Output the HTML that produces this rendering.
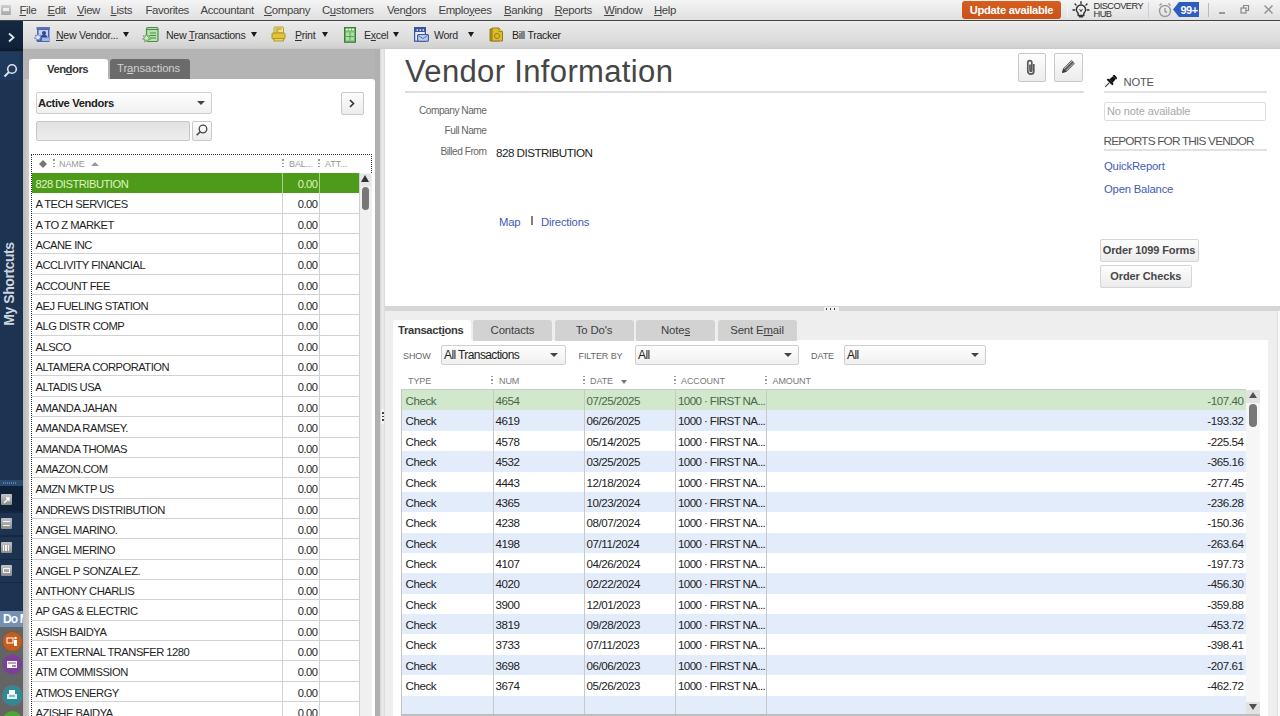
<!DOCTYPE html>
<html><head><meta charset="utf-8">
<style>
*{box-sizing:border-box;margin:0;padding:0}
html,body{width:1280px;height:716px;overflow:hidden;background:#fff;font-family:"Liberation Sans",sans-serif;position:relative}
.a{position:absolute}
u{text-decoration:underline}
/* menu bar */
#menu{left:0;top:0;width:1280px;height:21px;background:linear-gradient(#f4f4f4,#e0e0e0);border-bottom:1px solid #444}
.mi{position:absolute;top:3.5px;font-size:11.4px;color:#444;white-space:nowrap;letter-spacing:-0.38px}
/* toolbar */
#tool{left:23px;top:21px;width:1257px;height:28px;background:linear-gradient(#f0f0f0 0,#e8e8e8 12%,#dcdcdc 70%,#d0d0d0 96%,#c6c6c6 100%)}
.tb{position:absolute;top:28.5px;font-size:10.6px;color:#2c2c2c;white-space:nowrap;letter-spacing:-0.3px}
.arr{position:absolute;width:0;height:0;border-left:3.5px solid transparent;border-right:3.5px solid transparent;border-top:5px solid #1a1a1a;margin-top:1px;margin-left:0.5px}
.arrs{position:absolute;width:0;height:0;border-left:4px solid transparent;border-right:4px solid transparent;border-top:4.5px solid #444}
/* sidebar */
#side{left:0;top:21px;width:23px;height:695px;background:#1c3351}
/* vendor panel */
#vpanel{left:23px;top:49px;width:352px;height:668px;background:#b4b4b4}
#vstrip{left:23px;top:79px;width:6px;height:637px;background:linear-gradient(90deg,#b9b9b9,#cfcfcf)}
#vwhite{left:29px;top:79px;width:346px;height:637px;background:#fff;border-top-right-radius:3px}
.vr{position:absolute;left:32px;width:327px;height:20.35px;font-size:11.2px;color:#1e1e1e;background:#fff;letter-spacing:-0.5px}
.vr:after{content:"";position:absolute;left:0;right:0;bottom:0;height:1px;background:#d2d2d2}
.vr .vn{position:absolute;left:3.5px;top:4.5px;white-space:nowrap}
.vr .vb{position:absolute;left:250px;width:35.5px;text-align:right;top:4.5px}
.vr.sel{background:#4e9b1b;color:#dff5bf;height:20.5px !important}
.vr.sel:after{background:#4e9b1b}
.btn{position:absolute;background:linear-gradient(#fdfdfd,#ececec);border:1px solid #c9c9c9;border-radius:2px}
/* splitter */
#split{left:375px;top:49px;width:10px;height:667px;background:linear-gradient(90deg,#b0b0b0 0,#b0b0b0 5px,#d6d6d6 5px,#ececec 7.5px,#d9d9d9 10px)}
/* right pane */
#rpane{left:385px;top:49px;width:895px;height:257px;background:#fff}
.lbl{position:absolute;font-size:10.2px;color:#666;white-space:nowrap;text-align:right;letter-spacing:-0.5px}
.lnk{position:absolute;font-size:11.3px;color:#3f5db6;white-space:nowrap;letter-spacing:-0.2px}
#hsplit{left:385px;top:306px;width:895px;height:5px;background:#d6d6d6}
#tpane{left:385px;top:311px;width:895px;height:405px;background:#eeeeee}
#twhite{left:393px;top:340px;width:875px;height:376px;background:#fff}
.tab{position:absolute;top:320px;height:20.5px;background:#d2d2d2;border-radius:3px 3px 0 0;font-size:11.4px;color:#3e3e3e;text-align:center;line-height:20px;letter-spacing:-0.15px}
.tr{position:absolute;left:402px;width:844px;height:20.35px;font-size:11.6px;color:#222;background:#fff;letter-spacing:-0.45px}
.tr.alt{background:#e2ecfb}
.tr.sel{background:#d2e8cc;color:#4a664a}
.tr span{position:absolute;top:4px;white-space:nowrap}
.t1{left:3.5px}.t2{left:93.5px}.t3{left:184.5px}.t4{left:276px;letter-spacing:-0.62px}.t5{right:2.5px}
.cl{position:absolute;top:390px;width:1px;height:324px;background:#c8c8c8}
.hd{position:absolute;top:376px;font-size:9px;color:#777;letter-spacing:-0.1px;white-space:nowrap}
.dots{position:absolute;width:2px;height:9px;background:repeating-linear-gradient(#999 0,#999 1.5px,transparent 1.5px,transparent 3.5px)}
.dd{position:absolute;background:linear-gradient(#fefefe,#f0f0f0);border:1px solid #cfcfcf;border-radius:2px;font-size:12px;color:#222;white-space:nowrap;letter-spacing:-0.6px;line-height:19px !important}
</style></head><body>
<!-- MENU -->
<div id="menu" class="a">
 <div class="a" style="left:1px;top:5px;width:10px;height:10px;background:linear-gradient(#d0d0d0,#a8a8a8);border-radius:1px"></div>
 <div class="a" style="left:3px;top:8px;width:6px;height:3px;background:#eee"></div>
 <span class="mi" style="left:19.5px"><u>F</u>ile</span>
 <span class="mi" style="left:47.5px"><u>E</u>dit</span>
 <span class="mi" style="left:77px"><u>V</u>iew</span>
 <span class="mi" style="left:110.5px"><u>L</u>ists</span>
 <span class="mi" style="left:145.5px">Favorites</span>
 <span class="mi" style="left:200.5px">Accountant</span>
 <span class="mi" style="left:264px"><u>C</u>ompany</span>
 <span class="mi" style="left:322px">C<u>u</u>stomers</span>
 <span class="mi" style="left:387px">Ven<u>d</u>ors</span>
 <span class="mi" style="left:438.5px">Emplo<u>y</u>ees</span>
 <span class="mi" style="left:504px"><u>B</u>anking</span>
 <span class="mi" style="left:554.5px"><u>R</u>eports</span>
 <span class="mi" style="left:604px"><u>W</u>indow</span>
 <span class="mi" style="left:654px"><u>H</u>elp</span>
 <div class="a" style="left:962px;top:1px;width:99px;height:18px;background:linear-gradient(#d65e1e,#c9521a);border-radius:3px;color:#fff;font-weight:bold;font-size:11.2px;text-align:center;line-height:18px;letter-spacing:-0.3px">Update available</div>
 <div class="a" style="left:1067px;top:2px;width:1px;height:16px;background:#f4f4f4"></div>
 <!-- bulb -->
 <svg class="a" style="left:1072px;top:1px" width="20" height="18" viewBox="0 0 20 18"><g stroke="#2f2f2f" stroke-width="1.4" fill="none" stroke-linecap="round"><path d="M6.2 12.2A4.6 4.6 0 1 1 11.8 12.2V14.5H6.2Z"/><path d="M7.5 15.8h3"/><path d="M9 0.8v1.6M3 3l1 1M15 3l-1 1M1 9h1.8M15.2 9H17"/><path d="M7.8 8.5l1.2 2 1.2-2" stroke-width="1"/></g></svg>
 <div class="a" style="left:1093.5px;top:1.5px;font-size:9.3px;line-height:8.7px;color:#2c2c2c;letter-spacing:-0.55px">DISCOVERY<br>HUB</div>
 <div class="a" style="left:1148px;top:2px;width:1px;height:16px;background:#cfcfcf"></div>
 <svg class="a" style="left:1157px;top:2px" width="16" height="16" viewBox="0 0 16 16"><g stroke="#999" stroke-width="1.4" fill="none"><circle cx="8" cy="9" r="5.5"/><path d="M8 6v3.5l2 1"/><path d="M2.5 3.5l2-2M13.5 3.5l-2-2"/></g></svg>
 <svg class="a" style="left:1173px;top:2px" width="26" height="15" viewBox="0 0 26 15"><path d="M0 7.5L6 0H26V15H6Z" fill="#2f5cc0"/><text x="16" y="11.5" font-family="Liberation Sans" font-weight="bold" font-size="11" fill="#fff" text-anchor="middle" letter-spacing="-0.5">99+</text></svg>
 <div class="a" style="left:1208px;top:3px;width:1px;height:14px;background:#bbb"></div>
 <div class="a" style="left:1219px;top:12px;width:6px;height:2px;background:#999"></div>
 <svg class="a" style="left:1240px;top:4px" width="10" height="10" viewBox="0 0 10 10"><g stroke="#888" stroke-width="1.2" fill="none"><rect x="1" y="4" width="5" height="5"/><path d="M3.5 4V1.5h5v5H6"/></g></svg>
 <svg class="a" style="left:1263px;top:4px" width="11" height="11" viewBox="0 0 11 11"><g stroke="#999" stroke-width="1.6"><path d="M1.5 1.5l8 8M9.5 1.5l-8 8"/></g></svg>
</div>
<!-- TOOLBAR -->
<div id="tool" class="a"></div>
<svg class="a" style="left:34px;top:26px" width="18" height="17" viewBox="0 0 18 17"><rect x="2.5" y="1" width="13.5" height="2.5" rx=".5" fill="#5b73b5"/><rect x="3" y="3" width="12.5" height="13" fill="#4b66ae"/><rect x="4.5" y="4" width="9.5" height="9" fill="#c3d0f0"/><circle cx="10" cy="7" r="2" fill="#2c4896"/><path d="M6 13c0-3 2-4.5 4-4.5s4 1.5 4 4.5z" fill="#2c4896"/><rect x="8" y="11.5" width="7" height="3.5" fill="#9fb8ec"/><path d="M4 7.5l.9 2.1 2.2-.6-1.2 1.9 1.9 1.3-2.3.3.3 2.3-1.8-1.5-1.8 1.5.3-2.3-2.3-.3 1.9-1.3L1 9l2.2.6z" fill="#dbe6ff" stroke="#3a58a8" stroke-width=".5"/></svg>
<span class="tb" style="left:56px"><u>N</u>ew Vendor...</span>
<div class="arr" style="left:122px;top:31px"></div>
<svg class="a" style="left:142px;top:26px" width="18" height="17" viewBox="0 0 18 17"><rect x="4.5" y="1.5" width="11.5" height="14" rx="1.5" fill="#b3e3ad" stroke="#4f8a4a" stroke-width="1.2"/><path d="M5 3.5h11" stroke="#4f8a4a"/><path d="M8 7h6M8 9.5h6M8 12h6" stroke="#4f8a4a" stroke-width="1"/><path d="M4.5 8l1 2.3 2.4-.6-1.3 2 2 1.4-2.5.3.3 2.5-1.9-1.6-1.9 1.6.3-2.5-2.4-.3 2-1.4L1.2 9.7l2.4.6z" fill="#c2f0bc" stroke="#3f7a3a" stroke-width=".6"/></svg>
<span class="tb" style="left:166px">New <u>T</u>ransactions</span>
<div class="arr" style="left:250px;top:31px"></div>
<svg class="a" style="left:271px;top:26px" width="15" height="16" viewBox="0 0 15 16"><rect x="3" y="1" width="9.5" height="6" rx="1" fill="#f5e08a" stroke="#b39a22" stroke-width=".9"/><path d="M4.5 3h6M4.5 5h3" stroke="#8a7410" stroke-width=".8"/><rect x="1" y="7" width="13" height="6" rx="1" fill="#e3c23c" stroke="#a88c1a" stroke-width=".9"/><rect x="3" y="12.5" width="9.5" height="2.5" fill="#efd45a" stroke="#a88c1a" stroke-width=".8"/></svg>
<span class="tb" style="left:295px"><u>P</u>rint</span>
<div class="arr" style="left:321px;top:31px"></div>
<svg class="a" style="left:343.5px;top:26.5px" width="12" height="16" viewBox="0 0 12 16"><rect x=".6" y=".6" width="10.8" height="14.6" fill="#7cbf72" stroke="#3f7a3f" stroke-width="1.2"/><path d="M2 2.5h2M5 2.5h2M8 2.5h2" stroke="#eaffea" stroke-width="1.6"/><rect x="2" y="5.5" width="8" height="8" fill="#a8e2a0"/><path d="M6 5.5v8M2 9.5h8" stroke="#4f8f4a" stroke-width=".8"/></svg>
<span class="tb" style="left:364px">E<u>x</u>cel</span>
<div class="arr" style="left:392px;top:31px"></div>
<svg class="a" style="left:413.5px;top:26.5px" width="15" height="15" viewBox="0 0 15 15"><rect x=".6" y=".6" width="10.8" height="13.6" fill="#e6ecfb" stroke="#3d5395" stroke-width="1.2"/><rect x="1" y="1" width="10" height="4" fill="#3d5395"/><path d="M2.5 3h1.5M5.5 3h1.5M8.5 3h1.5" stroke="#e6ecfb" stroke-width="1.4"/><rect x="3.6" y="7.5" width="10.8" height="6.8" rx="1" fill="#b9cdf3" stroke="#3d5395" stroke-width="1.1"/><path d="M4.5 8.5l4.5 3.2 4.5-3.2" stroke="#3d5395" fill="none" stroke-width=".8"/></svg>
<span class="tb" style="left:434px">Word</span>
<div class="arr" style="left:467px;top:31px"></div>
<svg class="a" style="left:488.5px;top:26.5px" width="15" height="15" viewBox="0 0 15 15"><path d="M1 2h9v12H1z" fill="#b59a1c" stroke="#7f6a10" stroke-width=".8"/><path d="M3 1h7l3.5 3.5V14H3z" fill="#dcbc2c" stroke="#8d7612" stroke-width=".9"/><path d="M10 1v3.5h3.5" fill="#f3dc6a" stroke="#8d7612" stroke-width=".8"/><circle cx="8" cy="9" r="2.5" fill="none" stroke="#8d7612" stroke-width=".9"/></svg>
<span class="tb" style="left:512px;color:#222">Bill Tracker</span>
<!-- SIDEBAR -->
<div id="side" class="a"></div>
<div class="a" style="left:0;top:21px;width:23px;height:30px;background:linear-gradient(#142841,#10233a 85%,#0b1828)"></div>
<svg class="a" style="left:7px;top:32px" width="9" height="11" viewBox="0 0 9 11"><path d="M2 1.5l4.5 4-4.5 4" stroke="#dfe6ee" stroke-width="1.8" fill="none"/></svg>

<div class="a" style="left:0;top:52px;width:20px;height:28px;background:#1f3a5d"></div>

<svg class="a" style="left:3px;top:63px" width="15" height="15" viewBox="0 0 15 15"><circle cx="9" cy="6" r="4.3" stroke="#dbe3ec" stroke-width="1.6" fill="none"/><path d="M6 9l-4.5 4.5" stroke="#dbe3ec" stroke-width="2"/></svg>
<div class="a" style="left:-41px;top:276px;width:100px;height:16px;transform:rotate(-90deg);color:#cdd5df;font-weight:bold;font-size:14px;text-align:center;letter-spacing:-0.45px;line-height:16px;white-space:nowrap">My Shortcuts</div>
<div class="a" style="left:0;top:480px;width:23px;height:6px;background:#2a4b70"></div>
<div class="a" style="left:3px;top:482px;width:14px;height:2px;background:repeating-linear-gradient(90deg,#5d7fa6 0,#5d7fa6 1px,transparent 1px,transparent 2px)"></div>
<div class="a" style="left:0;top:486px;width:23px;height:25px;background:#10213a"></div>
<div class="a" style="left:0;top:511px;width:23px;height:1.5px;background:#142842"></div>
<div class="a" style="left:0;top:535px;width:23px;height:1.5px;background:#142842"></div>
<div class="a" style="left:0;top:558.5px;width:23px;height:1.5px;background:#142842"></div>
<div class="a" style="left:0;top:581.5px;width:23px;height:1.5px;background:#142842"></div>
<div class="a" style="left:1px;top:494px;width:11px;height:11px;background:linear-gradient(#c4c4c4,#8c8c8c);border-radius:1px"></div>
<svg class="a" style="left:3px;top:496px" width="8" height="8" viewBox="0 0 8 8"><path d="M1 7L6 2M3 2h3v3" stroke="#fff" stroke-width="1.3" fill="none"/></svg>
<div class="a" style="left:1px;top:518px;width:11px;height:11px;background:linear-gradient(#c4c4c4,#8c8c8c);border-radius:1px"></div>
<div class="a" style="left:3px;top:521px;width:7px;height:5px;border-top:1px solid #f4f4f4;border-bottom:1px solid #f4f4f4"></div>
<div class="a" style="left:1px;top:542px;width:11px;height:11px;background:linear-gradient(#c4c4c4,#8c8c8c);border-radius:1px"></div>
<div class="a" style="left:3px;top:545px;width:7px;height:6px;background:repeating-linear-gradient(90deg,#f4f4f4 0,#f4f4f4 1px,transparent 1px,transparent 2.5px)"></div>
<div class="a" style="left:1px;top:565px;width:11px;height:11px;background:linear-gradient(#c4c4c4,#8c8c8c);border-radius:1px"></div>
<div class="a" style="left:3px;top:568px;width:7px;height:5px;border:1px solid #f4f4f4"></div>
<div class="a" style="left:0;top:611px;width:23px;height:16px;background:#7490b2;color:#fff;font-weight:bold;font-size:12px;line-height:16px;padding-left:3px;white-space:nowrap;overflow:hidden;letter-spacing:-0.9px">Do M</div>
<div class="a" style="left:0;top:627px;width:23px;height:89px;background:#646464"></div>
<div class="a" style="left:2.5px;top:631.5px;width:19px;height:19px;border-radius:50%;background:#c55d1c;box-shadow:0 0 0 1px #7a5a48"></div>
<svg class="a" style="left:6px;top:635px" width="12" height="12" viewBox="0 0 12 12"><rect x="1" y="3" width="6" height="5" stroke="#fff" fill="none"/><circle cx="9.5" cy="3" r="1.3" fill="#fff"/><rect x="8" y="5" width="3" height="6" fill="#fff"/></svg>
<div class="a" style="left:2.5px;top:655px;width:19px;height:19px;border-radius:50%;background:#7b3f9a;box-shadow:0 0 0 1px #6a5a74"></div>
<svg class="a" style="left:6px;top:659px" width="12" height="11" viewBox="0 0 12 11"><rect x="1" y="2" width="10" height="7" fill="#fff"/><path d="M2 4h8" stroke="#7b3f9a"/><circle cx="7" cy="7" r=".9" fill="#7b3f9a"/><circle cx="9" cy="7" r=".9" fill="#7b3f9a"/></svg>
<div class="a" style="left:2.5px;top:685.5px;width:19px;height:19px;border-radius:50%;background:#2f8a98;box-shadow:0 0 0 1px #587a80"></div>
<svg class="a" style="left:6px;top:689px" width="12" height="12" viewBox="0 0 12 12"><rect x="3" y="1" width="6" height="4" fill="#fff"/><rect x="1" y="5" width="10" height="5" fill="#dfeff2"/><path d="M3 7h6" stroke="#2f8a98"/></svg>
<div class="a" style="left:2.5px;top:711px;width:19px;height:19px;border-radius:50%;background:#4aa830"></div>
<!-- VENDOR PANEL -->
<div id="vpanel" class="a"></div>
<div class="a" style="left:29px;top:58.5px;width:78.5px;height:21px;background:#fff;border-radius:3px 3px 0 0;font-weight:bold;font-size:11.3px;color:#383838;line-height:20px;padding-left:18px;letter-spacing:-0.5px">Ven<u>d</u>ors</div>
<div class="a" style="left:110px;top:58.5px;width:79.5px;height:20.5px;background:#6b6b6b;border-radius:3px 3px 0 0;font-size:11.3px;color:#d0d0d0;line-height:19px;padding-left:7px;letter-spacing:-0.1px">Tr<u>a</u>nsactions</div>
<div id="vstrip" class="a"></div>
<div id="vwhite" class="a"></div>
<div class="dd" style="left:35.5px;top:91.5px;width:176px;height:22.5px;font-weight:bold;font-size:11.2px;line-height:21px !important;padding-left:1.5px;color:#222;letter-spacing:-0.35px">Active Vendors</div>
<div class="arrs" style="left:197px;top:100.5px"></div>
<div class="a" style="left:35.5px;top:121px;width:154px;height:19.5px;background:linear-gradient(#e2e2e2,#ededed);border:1px solid #c6c6c6;border-radius:2px"></div>
<div class="btn" style="left:192px;top:121px;width:19.5px;height:19.5px"></div>
<svg class="a" style="left:195px;top:123px" width="14" height="14" viewBox="0 0 14 14"><circle cx="8" cy="6" r="3.8" stroke="#444" stroke-width="1.3" fill="none"/><path d="M5.2 8.8l-3.5 3.5" stroke="#444" stroke-width="1.6"/></svg>
<div class="btn" style="left:340.5px;top:92px;width:23.5px;height:23px"></div>
<svg class="a" style="left:348px;top:99px" width="8" height="9" viewBox="0 0 8 9"><path d="M2 1l3.5 3.5L2 8" stroke="#333" stroke-width="1.6" fill="none"/></svg>
<!-- list header -->
<div class="a" style="left:31px;top:154px;width:341px;height:562px;border-left:1px dotted #333;border-top:1px dotted #333"></div>
<div class="a" style="left:371px;top:154px;width:1px;height:19px;border-left:1px dotted #333"></div>
<svg class="a" style="left:38px;top:159px" width="10" height="10" viewBox="0 0 10 10"><path d="M5 1L9 5 5 9 1 5z" fill="#777"/></svg>
<div class="dots" style="left:52.5px;top:159px"></div>
<span class="hd" style="left:59px;top:159px;color:#999">NAME</span>
<div class="a" style="left:91px;top:162px;width:0;height:0;border-left:4px solid transparent;border-right:4px solid transparent;border-bottom:4px solid #999"></div>
<div class="dots" style="left:281.5px;top:159px"></div>
<span class="hd" style="left:289px;top:159px;color:#999">BAL...</span>
<div class="dots" style="left:318px;top:159px"></div>
<span class="hd" style="left:325px;top:159px;color:#999">ATT...</span>
<div class="vr sel" style="top:173px;height:20px"><span class="vn">828 DISTRIBUTION</span><span class="vb">0.00</span></div>
<div class="vr" style="top:193px;height:21px"><span class="vn">A TECH SERVICES</span><span class="vb">0.00</span></div>
<div class="vr" style="top:214px;height:20px"><span class="vn">A TO Z MARKET</span><span class="vb">0.00</span></div>
<div class="vr" style="top:234px;height:20px"><span class="vn">ACANE INC</span><span class="vb">0.00</span></div>
<div class="vr" style="top:254px;height:21px"><span class="vn">ACCLIVITY FINANCIAL</span><span class="vb">0.00</span></div>
<div class="vr" style="top:275px;height:20px"><span class="vn">ACCOUNT FEE</span><span class="vb">0.00</span></div>
<div class="vr" style="top:295px;height:20px"><span class="vn">AEJ FUELING STATION</span><span class="vb">0.00</span></div>
<div class="vr" style="top:315px;height:21px"><span class="vn">ALG DISTR COMP</span><span class="vb">0.00</span></div>
<div class="vr" style="top:336px;height:20px"><span class="vn">ALSCO</span><span class="vb">0.00</span></div>
<div class="vr" style="top:356px;height:20px"><span class="vn">ALTAMERA CORPORATION</span><span class="vb">0.00</span></div>
<div class="vr" style="top:376px;height:21px"><span class="vn">ALTADIS USA</span><span class="vb">0.00</span></div>
<div class="vr" style="top:397px;height:20px"><span class="vn">AMANDA JAHAN</span><span class="vb">0.00</span></div>
<div class="vr" style="top:417px;height:21px"><span class="vn">AMANDA RAMSEY.</span><span class="vb">0.00</span></div>
<div class="vr" style="top:438px;height:20px"><span class="vn">AMANDA THOMAS</span><span class="vb">0.00</span></div>
<div class="vr" style="top:458px;height:20px"><span class="vn">AMAZON.COM</span><span class="vb">0.00</span></div>
<div class="vr" style="top:478px;height:21px"><span class="vn">AMZN MKTP US</span><span class="vb">0.00</span></div>
<div class="vr" style="top:499px;height:20px"><span class="vn">ANDREWS DISTRIBUTION</span><span class="vb">0.00</span></div>
<div class="vr" style="top:519px;height:20px"><span class="vn">ANGEL MARINO.</span><span class="vb">0.00</span></div>
<div class="vr" style="top:539px;height:21px"><span class="vn">ANGEL MERINO</span><span class="vb">0.00</span></div>
<div class="vr" style="top:560px;height:20px"><span class="vn">ANGEL P SONZALEZ.</span><span class="vb">0.00</span></div>
<div class="vr" style="top:580px;height:20px"><span class="vn">ANTHONY CHARLIS</span><span class="vb">0.00</span></div>
<div class="vr" style="top:600px;height:21px"><span class="vn">AP GAS &amp; ELECTRIC</span><span class="vb">0.00</span></div>
<div class="vr" style="top:621px;height:20px"><span class="vn">ASISH BAIDYA</span><span class="vb">0.00</span></div>
<div class="vr" style="top:641px;height:20px"><span class="vn">AT EXTERNAL TRANSFER 1280</span><span class="vb">0.00</span></div>
<div class="vr" style="top:661px;height:21px"><span class="vn">ATM COMMISSION</span><span class="vb">0.00</span></div>
<div class="vr" style="top:682px;height:20px"><span class="vn">ATMOS ENERGY</span><span class="vb">0.00</span></div>
<div class="vr" style="top:702px;height:20px"><span class="vn">AZISHE BAIDYA</span><span class="vb">0.00</span></div>
<div class="a" style="left:282px;top:173px;width:1px;height:543px;background:#d2d2d2"></div>
<div class="a" style="left:318.5px;top:173px;width:1px;height:543px;background:#d2d2d2"></div>
<div class="a" style="left:282px;top:173px;width:1px;height:20px;background:#a6d38a"></div>
<div class="a" style="left:318.5px;top:173px;width:1px;height:20px;background:#a6d38a"></div>
<!-- vendor scrollbar -->
<div class="a" style="left:359px;top:173px;width:12.5px;height:543px;background:#f0f0f0;border-left:1px solid #d0d0d0"></div>
<div class="a" style="left:360px;top:174px;width:11px;height:12px;background:#e6e6e6"></div>
<div class="a" style="left:361px;top:175px;width:0;height:0;border-left:4.5px solid transparent;border-right:4.5px solid transparent;border-bottom:7px solid #333"></div>
<div class="a" style="left:361.5px;top:187px;width:7.5px;height:23px;background:#777;border-radius:4px"></div>
<!-- SPLITTER -->
<div id="split" class="a"></div>
<div class="a" style="left:381px;top:409px;width:3px;height:15px;background:#f6f6f6"></div><div class="a" style="left:382px;top:412px;width:1.5px;height:10px;background:repeating-linear-gradient(#444 0,#444 1.5px,transparent 1.5px,transparent 3.5px)"></div>
<!-- RIGHT PANE -->
<div id="rpane" class="a"></div>
<div class="a" style="left:405px;top:54px;font-size:31px;color:#454545;letter-spacing:0.35px;white-space:nowrap">Vendor Information</div>
<div class="a" style="left:405px;top:91px;width:679px;height:2px;background:#dedede"></div>
<div class="btn" style="left:1017.5px;top:53px;width:28px;height:28.5px"></div>
<svg class="a" style="left:1025px;top:59px" width="12" height="17" viewBox="0 0 12 17"><path d="M8.8 5v7.2a3 3 0 0 1-6 0V3.6a2 2 0 0 1 4 0V11.5a.9.9 0 0 1-1.8 0V5.5" stroke="#5a5a5a" stroke-width="1.7" fill="none"/></svg>
<div class="btn" style="left:1054px;top:53px;width:29px;height:28.5px"></div>
<svg class="a" style="left:1061px;top:59px" width="15" height="15" viewBox="0 0 15 15"><path d="M1 14l1.2-4.6L10.5 1.1l3.4 3.4-8.3 8.3z" fill="#5c5c5c"/><path d="M3.2 9.9l7.9-7.9M5 11.7l7.9-7.9" stroke="#e8e8e8" stroke-width=".7"/><path d="M1 14l1.2-4.6 3.4 3.4z" fill="#3a3a3a"/></svg>
<span class="lbl" style="left:405.5px;width:81px;top:104.5px">Company Name</span>
<span class="lbl" style="left:405.5px;width:81px;top:125px">Full Name</span>
<span class="lbl" style="left:405.5px;width:81px;top:145.5px">Billed From</span>
<span class="a" style="left:496px;top:146px;font-size:11.7px;color:#222;letter-spacing:-0.55px;white-space:nowrap">828 DISTRIBUTION</span>
<span class="lnk" style="left:499px;top:215.5px">Map</span>
<div class="a" style="left:531px;top:215.5px;width:2px;height:9.5px;background:#857a7c"></div>
<span class="lnk" style="left:541px;top:215.5px">Directions</span>
<svg class="a" style="left:1104px;top:75px" width="13" height="13" viewBox="0 0 13 13"><g transform="rotate(45 6.5 6.5)"><rect x="4" y="-1" width="5" height="2" fill="#111"/><path d="M4.6 1h3.8l.6 5H4z" fill="#111"/><rect x="2.5" y="6" width="8" height="2" rx=".5" fill="#111"/><path d="M6.5 8v6" stroke="#333" stroke-width="1"/></g></svg>
<span class="a" style="left:1123.5px;top:76px;font-size:11.2px;color:#555;letter-spacing:-0.2px">NOTE</span>
<div class="a" style="left:1104px;top:91px;width:163px;height:2px;background:#e2e2e2"></div>
<div class="a" style="left:1104px;top:102px;width:162px;height:19px;border:1px solid #dedede;border-radius:2px;font-size:11px;color:#a8a8a8;line-height:17px;padding-left:2px;letter-spacing:-0.1px;white-space:nowrap">No note available</div>
<span class="a" style="left:1103.5px;top:133.5px;font-size:11.8px;color:#555;letter-spacing:-0.8px;white-space:nowrap">REPORTS FOR THIS VENDOR</span>
<div class="a" style="left:1104px;top:149px;width:163px;height:2px;background:#e2e2e2"></div>
<span class="lnk" style="left:1104px;top:159.5px">QuickReport</span>
<span class="lnk" style="left:1104px;top:182.5px">Open Balance</span>
<div class="btn" style="left:1099.5px;top:239px;width:99px;height:22.5px;font-weight:bold;font-size:11px;color:#484848;text-align:center;line-height:20.5px;letter-spacing:-0.1px;border-color:#d6d6d6">Order 1099 Forms</div>
<div class="btn" style="left:1099.5px;top:265px;width:92.5px;height:22.5px;font-weight:bold;font-size:11px;color:#484848;text-align:center;line-height:20.5px;letter-spacing:-0.1px;border-color:#d6d6d6">Order Checks</div>
<div id="hsplit" class="a"></div>
<div class="a" style="left:824px;top:306.5px;width:15px;height:4px;background:#f2f2f2"></div><div class="a" style="left:826px;top:308px;width:11px;height:1.5px;background:repeating-linear-gradient(90deg,#444 0,#444 1.5px,transparent 1.5px,transparent 4px)"></div>
<!-- TRANSACTIONS PANE -->
<div id="tpane" class="a"></div>
<div id="twhite" class="a"></div>
<div class="a" style="left:393px;top:320px;width:77.5px;height:21px;background:#fff;border-radius:3px 3px 0 0;font-weight:bold;font-size:11.2px;color:#383838;line-height:20px;padding-left:5px;letter-spacing:-0.3px">Transact<u>i</u>ons</div>
<div class="tab" style="left:473px;width:79px">Contacts</div>
<div class="tab" style="left:554.5px;width:79px">To Do's</div>
<div class="tab" style="left:636px;width:79px">Note<u>s</u></div>
<div class="tab" style="left:717.5px;width:79px">Sent E<u>m</u>ail</div>
<span class="hd" style="left:403px;top:350.5px;color:#666">SHOW</span>
<div class="dd" style="left:441px;top:345px;width:124.5px;height:19.5px;line-height:17px;padding-left:2px">All Transactions</div>
<div class="arrs" style="left:550px;top:353px"></div>
<span class="hd" style="left:578.5px;top:350.5px;color:#666">FILTER BY</span>
<div class="dd" style="left:635px;top:345px;width:163.5px;height:19.5px;line-height:17px;padding-left:2px">All</div>
<div class="arrs" style="left:784px;top:353px"></div>
<span class="hd" style="left:811px;top:350.5px;color:#666">DATE</span>
<div class="dd" style="left:844px;top:345px;width:142px;height:19.5px;line-height:17px;padding-left:2px">All</div>
<div class="arrs" style="left:971px;top:353px"></div>
<!-- table header -->
<span class="hd" style="left:408px">TYPE</span>
<div class="dots" style="left:491px;top:376px"></div>
<span class="hd" style="left:499px">NUM</span>
<div class="dots" style="left:582.5px;top:376px"></div>
<span class="hd" style="left:590px">DATE</span>
<div class="a" style="left:620.5px;top:379.5px;width:0;height:0;border-left:3.5px solid transparent;border-right:3.5px solid transparent;border-top:4px solid #777"></div>
<div class="dots" style="left:674px;top:376px"></div>
<span class="hd" style="left:681px">ACCOUNT</span>
<div class="dots" style="left:765px;top:376px"></div>
<span class="hd" style="left:772.5px">AMOUNT</span>
<div class="a" style="left:401px;top:389px;width:845px;height:327px;border-left:1px solid #c4c4c4;border-top:1px solid #c6cec6"></div>
<div class="tr sel" style="top:390px;height:20px"><span class="t1">Check</span><span class="t2">4654</span><span class="t3">07/25/2025</span><span class="t4">1000 · FIRST NA...</span><span class="t5">-107.40</span></div>
<div class="tr alt" style="top:410px;height:21px"><span class="t1">Check</span><span class="t2">4619</span><span class="t3">06/26/2025</span><span class="t4">1000 · FIRST NA...</span><span class="t5">-193.32</span></div>
<div class="tr" style="top:431px;height:20px"><span class="t1">Check</span><span class="t2">4578</span><span class="t3">05/14/2025</span><span class="t4">1000 · FIRST NA...</span><span class="t5">-225.54</span></div>
<div class="tr alt" style="top:451px;height:21px"><span class="t1">Check</span><span class="t2">4532</span><span class="t3">03/25/2025</span><span class="t4">1000 · FIRST NA...</span><span class="t5">-365.16</span></div>
<div class="tr" style="top:472px;height:20px"><span class="t1">Check</span><span class="t2">4443</span><span class="t3">12/18/2024</span><span class="t4">1000 · FIRST NA...</span><span class="t5">-277.45</span></div>
<div class="tr alt" style="top:492px;height:20px"><span class="t1">Check</span><span class="t2">4365</span><span class="t3">10/23/2024</span><span class="t4">1000 · FIRST NA...</span><span class="t5">-236.28</span></div>
<div class="tr" style="top:512px;height:21px"><span class="t1">Check</span><span class="t2">4238</span><span class="t3">08/07/2024</span><span class="t4">1000 · FIRST NA...</span><span class="t5">-150.36</span></div>
<div class="tr alt" style="top:533px;height:20px"><span class="t1">Check</span><span class="t2">4198</span><span class="t3">07/11/2024</span><span class="t4">1000 · FIRST NA...</span><span class="t5">-263.64</span></div>
<div class="tr" style="top:553px;height:20px"><span class="t1">Check</span><span class="t2">4107</span><span class="t3">04/26/2024</span><span class="t4">1000 · FIRST NA...</span><span class="t5">-197.73</span></div>
<div class="tr alt" style="top:573px;height:21px"><span class="t1">Check</span><span class="t2">4020</span><span class="t3">02/22/2024</span><span class="t4">1000 · FIRST NA...</span><span class="t5">-456.30</span></div>
<div class="tr" style="top:594px;height:20px"><span class="t1">Check</span><span class="t2">3900</span><span class="t3">12/01/2023</span><span class="t4">1000 · FIRST NA...</span><span class="t5">-359.88</span></div>
<div class="tr alt" style="top:614px;height:20px"><span class="t1">Check</span><span class="t2">3819</span><span class="t3">09/28/2023</span><span class="t4">1000 · FIRST NA...</span><span class="t5">-453.72</span></div>
<div class="tr" style="top:634px;height:21px"><span class="t1">Check</span><span class="t2">3733</span><span class="t3">07/11/2023</span><span class="t4">1000 · FIRST NA...</span><span class="t5">-398.41</span></div>
<div class="tr alt" style="top:655px;height:20px"><span class="t1">Check</span><span class="t2">3698</span><span class="t3">06/06/2023</span><span class="t4">1000 · FIRST NA...</span><span class="t5">-207.61</span></div>
<div class="tr" style="top:675px;height:20px"><span class="t1">Check</span><span class="t2">3674</span><span class="t3">05/26/2023</span><span class="t4">1000 · FIRST NA...</span><span class="t5">-462.72</span></div>
<div class="tr alt" style="top:695px;height:19px;background:#fff"></div><div class="tr alt" style="top:696px;height:18px"></div>
<div class="cl" style="left:492.5px"></div>
<div class="cl" style="left:583.5px"></div>
<div class="cl" style="left:675px"></div>
<div class="cl" style="left:766px"></div>
<div class="a" style="left:401px;top:714px;width:859px;height:2px;background:#bdbdbd"></div>
<!-- tx scrollbar -->
<div class="a" style="left:1246px;top:390px;width:13.5px;height:324px;background:#f6f6f6"></div>
<div class="a" style="left:1246px;top:390px;width:13.5px;height:12.5px;background:#e2e2e2"></div>
<div class="a" style="left:1249px;top:392px;width:0;height:0;border-left:4px solid transparent;border-right:4px solid transparent;border-bottom:6.5px solid #505050"></div>
<div class="a" style="left:1249px;top:404px;width:8px;height:22.5px;background:#777;border-radius:4px"></div>
<div class="a" style="left:1246px;top:702px;width:13.5px;height:12px;background:#e2e2e2"></div>
<div class="a" style="left:1249px;top:704px;width:0;height:0;border-left:4px solid transparent;border-right:4px solid transparent;border-top:6.5px solid #505050"></div>
<div class="a" style="left:1277px;top:311px;width:3px;height:405px;background:#fafafa;border-left:1px solid #e0e0e0"></div>
</body></html>
